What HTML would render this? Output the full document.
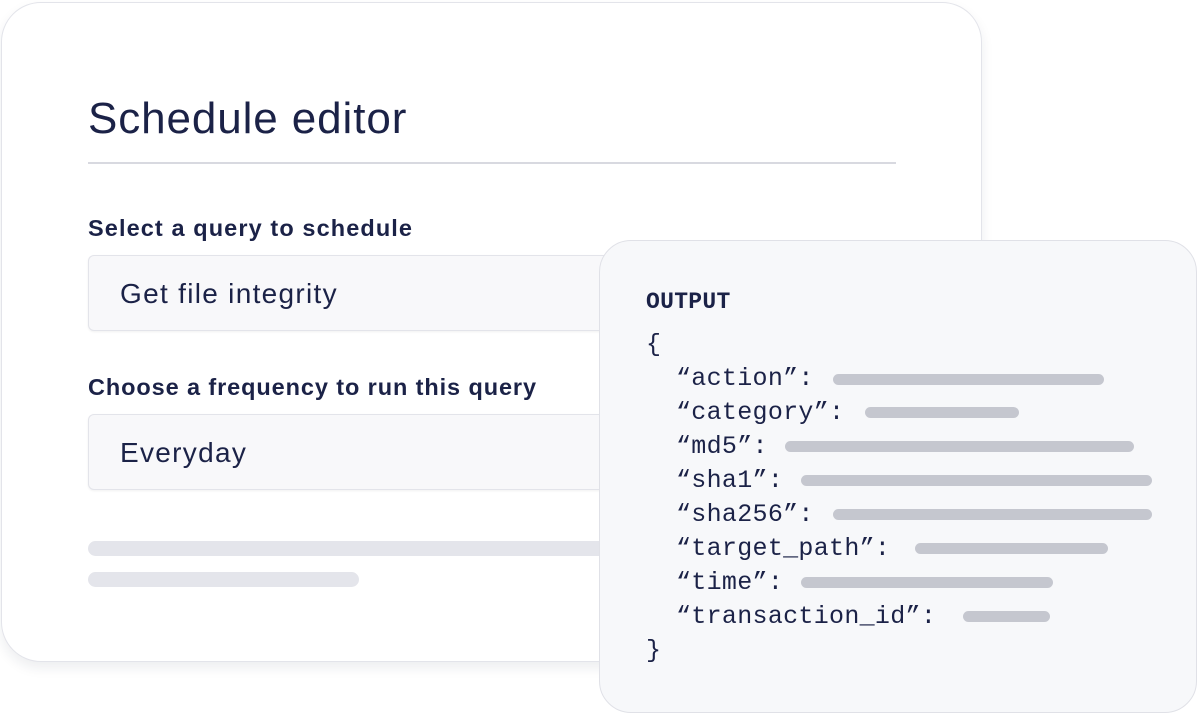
<!DOCTYPE html>
<html><head><style>
body{margin:0;width:1200px;height:715px;background:#fff;position:relative;overflow:hidden;font-family:"Liberation Sans",sans-serif;color:#1b2247}
.card{position:absolute;left:1px;top:2px;width:979px;height:658px;border:1.5px solid #e3e4ea;border-radius:40px;background:#fff;box-shadow:0 6px 12px rgba(30,35,60,0.08)}
h1{position:absolute;left:88px;top:94px;margin:0;font-size:44px;font-weight:400;letter-spacing:0.9px}
.hr{position:absolute;left:88px;top:162px;width:808px;height:2px;background:#d8d9e0}
.lbl{position:absolute;left:88px;font-size:23.5px;font-weight:700;letter-spacing:1.1px}
.inp{position:absolute;left:88px;width:560px;height:74px;border:1px solid #e3e4ea;border-radius:6px;background:#f8f8fa;box-shadow:0 1px 2px rgba(0,0,0,0.06)}
.inp span{position:absolute;left:31px;top:22px;font-size:28px;letter-spacing:1.3px}
.gb{position:absolute;height:15px;border-radius:8px;background:#e4e5eb}
.out{position:absolute;left:599px;top:240px;width:596px;height:471px;border:1.5px solid #e0e1e7;border-radius:32px;background:#f7f8fa}
.code{position:absolute;font-family:"Liberation Mono",monospace;font-size:25px;letter-spacing:0.3px;color:#1b2247;white-space:pre;line-height:34px}
.b{position:absolute;height:11px;border-radius:6px;background:#c5c7cf}
</style></head><body>
<div class="card"></div>
<h1>Schedule editor</h1>
<div class="hr"></div>
<div class="lbl" style="top:215px">Select a query to schedule</div>
<div class="inp" style="top:255px"><span>Get file integrity</span></div>
<div class="lbl" style="top:374px;letter-spacing:0.9px">Choose a frequency to run this query</div>
<div class="inp" style="top:414px"><span>Everyday</span></div>
<div class="gb" style="left:88px;top:541px;width:540px"></div>
<div class="gb" style="left:88px;top:572px;width:271px"></div>
<div class="out"></div>
<div class="code" style="left:646px;top:285px;font-weight:700;font-size:23px">OUTPUT</div>
<div class="code" style="left:646px;top:328px">{








}</div>
<div class="code" style="left:676px;top:362px">“action”:
“category”:
“md5”:
“sha1”:
“sha256”:
“target_path”:
“time”:
“transaction_id”:</div>
<div class="b" style="left:833px;top:374px;width:271px"></div>
<div class="b" style="left:865px;top:407px;width:154px"></div>
<div class="b" style="left:785px;top:441px;width:349px"></div>
<div class="b" style="left:801px;top:475px;width:351px"></div>
<div class="b" style="left:833px;top:509px;width:319px"></div>
<div class="b" style="left:915px;top:543px;width:193px"></div>
<div class="b" style="left:801px;top:577px;width:252px"></div>
<div class="b" style="left:963px;top:611px;width:87px"></div>
</body></html>
